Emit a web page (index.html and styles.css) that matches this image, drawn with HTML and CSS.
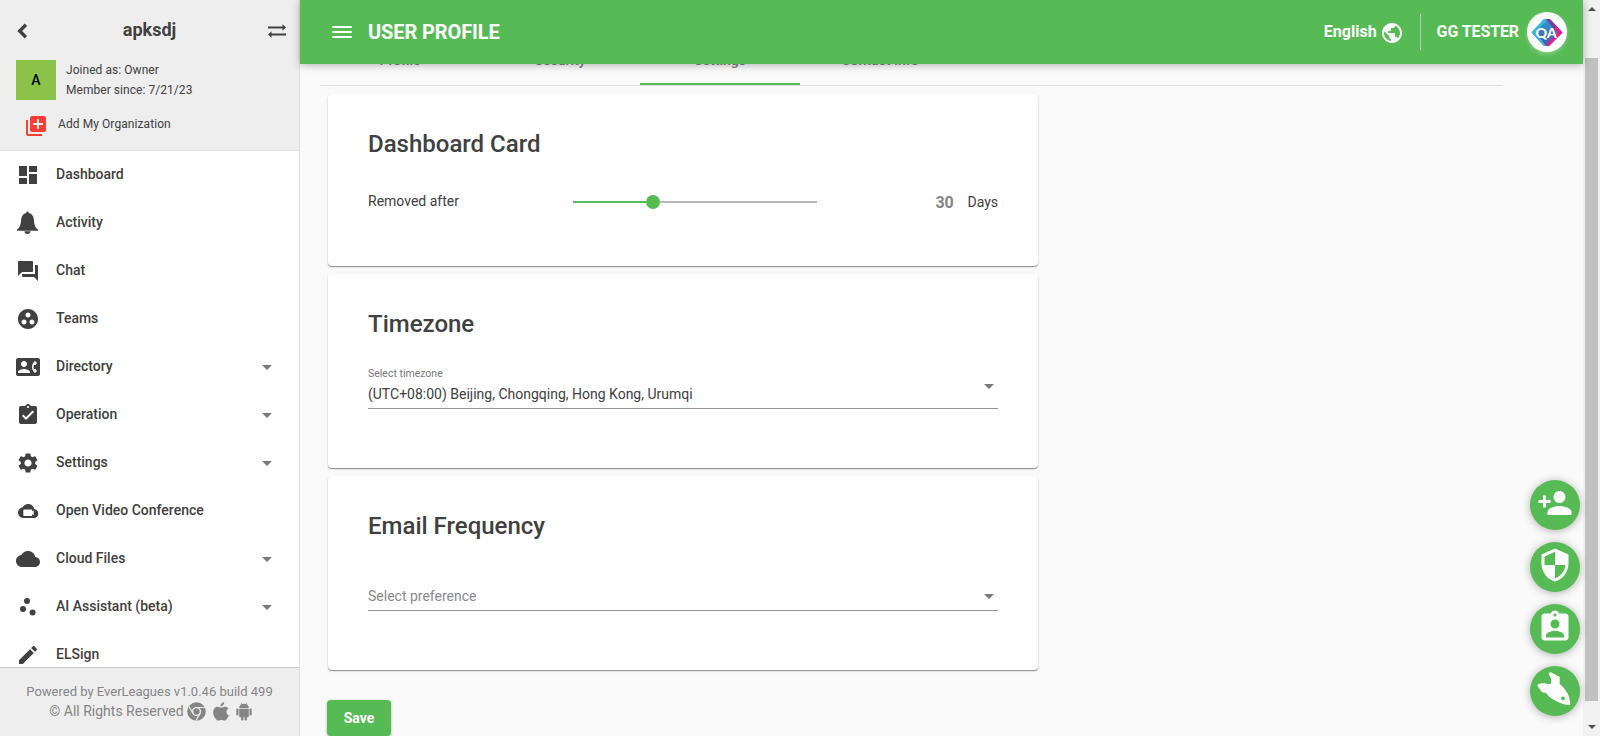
FILE: index.html
```html
<!DOCTYPE html>
<html lang="en">
<head>
<meta charset="utf-8">
<title>User Profile</title>
<link rel="stylesheet" href="styles.css">
</head>
<body>
<div class="app">
  <aside class="sidebar">
    <div class="org">
      <div class="org-top">
        <svg class="back" width="24" height="24" viewBox="0 0 24 24"><path d="M15.900 5.800L9.700 12l6.200 6.200" fill="none" stroke="currentColor" stroke-width="3.400"/></svg>
        <h2 class="org-name">apksdj</h2>
        <svg class="swap" width="20" height="16" viewBox="0 0 20 16"><path d="M1 4.500h15M4 11.500h15" stroke="currentColor" stroke-width="2"/><path d="M15.500 1.300v6.400L19 4.500zM4.500 8.300v6.400L1 11.500z" fill="currentColor"/></svg>
      </div>
      <div class="org-info">
        <div class="org-avatar">A</div>
        <div class="org-lines"><div>Joined as: Owner</div><div>Member since: 7/21/23</div></div>
      </div>
      <div class="org-add">
        <svg class="icon red" viewBox="0 0 24 24"><path d="M4 6H2v14c0 1.100.9 2 2 2h14v-2H4V6zm16-4H8c-1.100 0-2 .9-2 2v12c0 1.100.9 2 2 2h12c1.100 0 2-.9 2-2V4c0-1.100-.9-2-2-2zm-1 9h-4v4h-2v-4H9V9h4V5h2v4h4v2z"/></svg>
        <span>Add My Organization</span>
      </div>
    </div>
    <nav class="nav">
      <a class="nav-item"><svg class="icon" viewBox="0 0 24 24"><path d="M3 13h8V3H3v10zm0 8h8v-6H3v6zm10 0h8V11h-8v10zm0-18v6h8V3h-8z"/></svg><span>Dashboard</span></a>
      <a class="nav-item"><svg class="icon" viewBox="0 0 24 24"><path d="M11.500 .5c.8 0 1.300.6 1.300 1.500 3.200.7 4.700 3 5 6.200.4 4.800.9 8.200 4.200 10.300v1.200H1v-1.200c3.300-2.100 3.800-5.500 4.200-10.300.3-3.200 1.800-5.500 5-6.200 0-.9.500-1.500 1.300-1.500zM8.500 20.300h6c0 1.600-1.300 2.700-3 2.700s-3-1.100-3-2.700z"/></svg><span>Activity</span></a>
      <a class="nav-item"><svg class="icon" viewBox="0 0 24 24"><path d="M21 6h-2v9H6v2c0 .55.45 1 1 1h11l4 4V7c0-.55-.45-1-1-1zm-4 6V3c0-.55-.45-1-1-1H3c-.55 0-1 .45-1 1v14l4-4h10c.55 0 1-.45 1-1z"/></svg><span>Chat</span></a>
      <a class="nav-item"><svg class="icon" viewBox="0 0 24 24"><path d="M12 2C6.480 2 2 6.480 2 12s4.480 10 10 10 10-4.480 10-10S17.520 2 12 2zM8 17.500c-1.380 0-2.500-1.120-2.500-2.500s1.120-2.500 2.500-2.500 2.500 1.120 2.500 2.500-1.120 2.500-2.500 2.500zM9.500 8c0-1.380 1.120-2.500 2.500-2.500s2.500 1.120 2.500 2.500-1.120 2.500-2.500 2.500S9.500 9.380 9.500 8zm6.500 9.500c-1.380 0-2.500-1.120-2.500-2.500s1.120-2.500 2.500-2.500 2.500 1.120 2.500 2.500-1.120 2.500-2.500 2.500z"/></svg><span>Teams</span></a>
      <a class="nav-item"><svg class="icon" viewBox="0 0 24 24"><path d="M22 3H2C.9 3 0 3.900 0 5v14c0 1.100.9 2 2 2h20c1.100 0 1.990-.9 1.990-2L24 5c0-1.100-.9-2-2-2zM8 6c1.660 0 3 1.340 3 3s-1.340 3-3 3-3-1.340-3-3 1.340-3 3-3zm6 12H2v-1c0-2 4-3.100 6-3.100s6 1.100 6 3.100v1zm3.850-4h1.640L21 16l-1.990 1.990c-1.310-.98-2.280-2.380-2.730-3.990-.18-.64-.28-1.310-.28-2s.1-1.360.28-2c.45-1.620 1.420-3.010 2.730-3.990L21 8l-1.510 2h-1.640c-.22.63-.35 1.300-.35 2s.13 1.370.35 2z"/></svg><span>Directory</span><i class="caret"></i></a>
      <a class="nav-item"><svg class="icon" viewBox="0 0 24 24"><path d="M19 3h-4.180C14.400 1.840 13.300 1 12 1c-1.300 0-2.400.84-2.820 2H5c-1.100 0-2 .9-2 2v14c0 1.100.9 2 2 2h14c1.100 0 2-.9 2-2V5c0-1.100-.9-2-2-2zm-7 0c.55 0 1 .45 1 1s-.45 1-1 1-1-.45-1-1 .45-1 1-1zm-2 14l-4-4 1.410-1.410L10 14.170l6.590-6.590L18 9l-8 8z"/></svg><span>Operation</span><i class="caret"></i></a>
      <a class="nav-item"><svg class="icon" viewBox="0 0 24 24"><path d="M19.140 12.940c.04-.3.06-.61.06-.94 0-.32-.02-.64-.07-.94l2.030-1.580c.18-.14.23-.41.12-.61l-1.920-3.320c-.12-.22-.37-.29-.59-.22l-2.390.96c-.5-.38-1.030-.7-1.620-.94l-.36-2.540c-.04-.24-.24-.41-.48-.41h-3.840c-.24 0-.43.17-.47.41l-.36 2.540c-.59.24-1.130.57-1.620.94l-2.390-.96c-.22-.08-.47 0-.59.22L2.740 8.870c-.12.21-.08.47.12.61l2.030 1.580c-.05.3-.09.63-.09.94s.02.64.07.94l-2.030 1.580c-.18.14-.23.41-.12.61l1.920 3.320c.12.22.37.29.59.22l2.390-.96c.5.38 1.030.7 1.620.94l.36 2.540c.05.24.24.41.48.41h3.840c.24 0 .44-.17.47-.41l.36-2.540c.59-.24 1.130-.56 1.620-.94l2.390.96c.22.08.47 0 .59-.22l1.920-3.320c.12-.22.07-.47-.12-.61l-2.010-1.580zM12 15.600c-1.980 0-3.600-1.620-3.600-3.600s1.620-3.600 3.600-3.600 3.600 1.620 3.600 3.600-1.620 3.600-3.600 3.600z"/></svg><span>Settings</span><i class="caret"></i></a>
      <a class="nav-item"><svg class="icon" viewBox="0 0 24 24"><path fill-rule="evenodd" d="M18.300 10.100C17.700 7.200 15.200 5 12.200 5 9.800 5 7.600 6.400 6.600 8.400 4 8.700 2 10.900 2 13.600 2 16.500 4.300 19 7.200 19H18c2.400 0 4.300-1.900 4.300-4.300 0-2.400-1.800-4.400-4-4.600zM8 10.500h7.500c.4 0 .7.3.7.7v1.300l1.500-1.300v5.100l-1.500-1.300v1.300c0 .4-.3.700-.7.700H8c-.4 0-.7-.3-.7-.7v-5.100c0-.4.3-.7.7-.7z"/></svg><span>Open Video Conference</span></a>
      <a class="nav-item"><svg class="icon" viewBox="0 0 24 24"><path d="M19.350 10.040C18.670 6.590 15.640 4 12 4 9.110 4 6.600 5.640 5.350 8.040 2.340 8.360 0 10.910 0 14c0 3.310 2.690 6 6 6h13c2.760 0 5-2.240 5-5 0-2.640-2.050-4.780-4.650-4.960z"/></svg><span>Cloud Files</span><i class="caret"></i></a>
      <a class="nav-item"><svg class="icon" viewBox="0 0 24 24"><circle cx="7" cy="14" r="3"/><circle cx="11" cy="6" r="3"/><circle cx="16.600" cy="17.600" r="3"/></svg><span>AI Assistant (beta)</span><i class="caret"></i></a>
      <a class="nav-item"><svg class="icon" viewBox="0 0 24 24"><path d="M3 17.250V21h3.750L17.810 9.940l-3.750-3.750L3 17.250zM20.710 7.040c.39-.39.39-1.020 0-1.410l-2.340-2.340c-.39-.39-1.020-.39-1.410 0l-1.830 1.830 3.750 3.750 1.830-1.830z"/></svg><span>ELSign</span></a>
    </nav>
    <footer class="side-foot">
      <div>Powered by EverLeagues v1.0.46 build 499</div>
      <div class="rights"><span>© All Rights Reserved</span>
        <svg class="chrome" width="19" height="19" viewBox="0 0 20 20"><circle cx="10" cy="10" r="9.800" fill="currentColor"/><circle cx="10" cy="10" r="4.100" fill="none" stroke="#eee" stroke-width="1.500"/><path d="M10 5.800h8.800M6.300 12L2 4.600M13.700 12l-4.300 7.500" stroke="#eee" stroke-width="1.200"/></svg>
        <svg class="apple" width="16" height="19" viewBox="0 0 16 19"><path fill="currentColor" d="M11.200 0c.1 1.200-.3 2.200-1 3-.7.900-1.700 1.400-2.700 1.300-.1-1.100.4-2.200 1-2.900C9.200.6 10.300.1 11.200 0zM15.500 6.500c-1.300.8-2 1.900-2 3.300 0 1.600.9 2.900 2.300 3.500-.5 1.500-1.300 2.900-2.300 4.100-.6.800-1.300 1.200-2.200 1.200-1.100 0-1.600-.7-3-.7s-2 .7-3 .7c-.9 0-1.600-.5-2.300-1.300C1.200 15.400.2 12.800.2 10.300c0-3.500 2.200-5.500 4.500-5.500 1.400 0 2.600.9 3.500.9.800 0 2.200-1 3.900-1 1.400 0 2.600.6 3.400 1.800z"/></svg>
        <svg class="android" width="16" height="19" viewBox="0 0 16 19"><path fill="currentColor" d="M3.200 6C3.300 4.200 4.200 3 5.500 2.300L4.600.7l.4-.2.9 1.600a5.600 5.600 0 0 1 4.200 0L11 .5l.4.2-.9 1.600C11.800 3 12.700 4.200 12.800 6zM3.200 6.700h9.600v7.500c0 .6-.5 1-1 1h-.9v2.500a1.200 1.200 0 0 1-2.300 0v-2.500H7.400v2.500a1.200 1.200 0 0 1-2.300 0v-2.500h-.9c-.6 0-1-.4-1-1z"/><rect x=".3" y="6.500" width="2.200" height="7" rx="1.100" fill="currentColor"/><rect x="13.500" y="6.500" width="2.200" height="7" rx="1.100" fill="currentColor"/></svg>
      </div>
    </footer>
  </aside>
  <div class="main">
    <header class="topbar">
      <svg class="menu" viewBox="0 0 24 24"><path d="M2.300 18h19.400v-2H2.300v2zm0-5h19.400v-2H2.300v2zm0-7v2h19.400V6H2.300z"/></svg>
      <h1>USER PROFILE</h1>
      <div class="lang"><span>English</span><svg viewBox="0 0 24 24"><path d="M12 2C6.480 2 2 6.480 2 12s4.480 10 10 10 10-4.480 10-10S17.520 2 12 2zm-1 17.930c-3.950-.49-7-3.850-7-7.930 0-.62.08-1.210.21-1.790L9 15v1c0 1.100.9 2 2 2v1.930zm6.900-2.540c-.26-.81-1-1.390-1.900-1.390h-1v-3c0-.55-.45-1-1-1H8v-2h2c.55 0 1-.45 1-1V7h2c1.100 0 2-.9 2-2v-.41c2.930 1.190 5 4.060 5 7.410 0 2.080-.8 3.970-2.100 5.390z"/></svg></div>
      <div class="user">GG TESTER</div>
      <div class="avatar">
        <svg width="40" height="40" viewBox="0 0 40 40">
          <defs><linearGradient id="g" x1="0" y1="0" x2="0" y2="1"><stop offset="0" stop-color="#2a9fd0"/><stop offset="1" stop-color="#4a54a8"/></linearGradient></defs>
          <path d="M17 7h5l13.500 13.500L22 34h-5L4.500 20.500z" fill="url(#g)"/>
          <path d="M17 7h4L9 20.500l10 13.500h-2L4.500 20.500z" fill="#38b8e0"/>
          <path d="M19 7h4l8 8.500-3 3z" fill="#7b3a9e"/><path d="M29 13.500l6.500 7L22 34h-3.500l12-13.500-2.800-3z" fill="#ea1a8d"/>
          <text x="8.500" y="25.500" textLength="21.500" lengthAdjust="spacingAndGlyphs" class="qa">QA</text>
        </svg>
      </div>
    </header>
    <div class="tabs"><div class="tab">Profile</div><div class="tab">Security</div><div class="tab active">Settings</div><div class="tab">Contact Info</div></div>
    <div class="cards">
      <section class="card short">
        <h3>Dashboard Card</h3>
        <div class="slider-row">
          <span class="slider-label">Removed after</span>
          <div class="slider"><div class="fill"></div><div class="thumb"></div><div class="rest"></div></div>
          <b>30</b><span class="days">Days</span>
        </div>
      </section>
      <section class="card">
        <h3>Timezone</h3>
        <div class="field"><div><small>Select timezone</small><p>(UTC+08:00) Beijing, Chongqing, Hong Kong, Urumqi</p></div><i class="caret"></i></div>
      </section>
      <section class="card">
        <h3>Email Frequency</h3>
        <div class="field empty"><div><p>Select preference</p></div><i class="caret"></i></div>
      </section>
    </div>
    <button class="save">Save</button>
    <div class="fabs">
      <div class="fab"><svg viewBox="0 0 24 24"><path d="M15 12c2.210 0 4-1.790 4-4s-1.790-4-4-4-4 1.790-4 4 1.790 4 4 4zm-9-2V7H4v3H1v2h3v3h2v-3h3v-2H6zm9 4c-2.670 0-8 1.340-8 4v2h16v-2c0-2.660-5.330-4-8-4z"/></svg></div>
      <div class="fab"><svg viewBox="0 0 24 24"><path d="M12 1L3 5v6c0 5.550 3.840 10.740 9 12 5.160-1.260 9-6.450 9-12V5l-9-4zm0 10.990h7c-.53 4.120-3.280 7.790-7 8.940V12H5V6.300l7-3.110v8.800z"/></svg></div>
      <div class="fab"><svg viewBox="0 0 24 24"><path d="M19 3h-4.180C14.400 1.840 13.300 1 12 1c-1.300 0-2.400.84-2.820 2H5c-1.100 0-2 .9-2 2v14c0 1.100.9 2 2 2h14c1.100 0 2-.9 2-2V5c0-1.100-.9-2-2-2zm-7 0c.55 0 1 .45 1 1s-.45 1-1 1-1-.45-1-1 .45-1 1-1zm0 4c1.660 0 3 1.340 3 3s-1.340 3-3 3-3-1.340-3-3 1.340-3 3-3zm6 12H6v-1.400c0-2 4-3.100 6-3.100s6 1.100 6 3.100V19z"/></svg></div>
      <div class="fab"><svg viewBox="0 0 36 36"><path fill-rule="evenodd" d="M12 1.700L14 1.300 22.700 6V13Q30 19 32 26Q33.500 31 33 34Q28 34 23 32Q15 28 12 25.500L8.700 21.700 5 21.300 .5 15 .9 13 7 12 12 13.300 14.200 12.300V7.500L11.700 3.200zM26 25.400a1.900 1.900 0 1 0 .01 0z"/></svg></div>
    </div>
  </div>
  <div class="scrollbar"><i class="up"></i><div class="bar"></div><i class="down"></i></div>
</div>
</body>
</html>
```
FILE: styles.css
```css
* { box-sizing: border-box; }
body { margin: 0; font-family: Roboto, "Liberation Sans", sans-serif; font-size: 14px; color: #404040; background: #fafafa; overflow: hidden; }
h1, h2, h3, p { margin: 0; }
.app { display: flex; height: 736px; overflow: hidden; }

.sidebar { width: 300px; flex: none; display: flex; flex-direction: column; background: #fff; border-right: 1px solid #e0e0e0; }
.org { height: 151px; flex: none; background: #eee; border-bottom: 1px solid #e0e0e0; color: #404040; }
.org-top { display: flex; align-items: center; height: 60px; padding: 2px 12px 0 10px; }
.back, .swap { flex: none; }
.org-name { flex: 1; text-align: center; font-size: 18px; font-weight: 700; line-height: 24px; padding: 0 2px 3px 0; }
.org-info { display: flex; gap: 10px; padding-left: 16px; }
.org-avatar { width: 40px; height: 40px; background: #8bc34a; color: #000; font-size: 14px; font-weight: 500; display: flex; align-items: center; justify-content: center; padding-bottom: 1px; }
.org-lines { font-size: 12px; line-height: 20px; letter-spacing: .05px; }
.org-add { display: flex; align-items: center; gap: 10px; padding: 14px 0 0 24px; font-size: 12px; letter-spacing: .08px; }
.org-add span { line-height: 20px; padding-bottom: 4px; }
.icon { width: 24px; height: 24px; fill: #404040; flex: none; }
.icon.red { fill: #ff3d35; }
.nav { flex: 1; min-height: 0; overflow: hidden; }
.nav-item { display: flex; align-items: center; height: 48px; padding: 0 27px 0 16px; font-weight: 500; }
.nav-item span { flex: 1; padding: 0 0 2px 16px; }
.caret { width: 0; height: 0; border: 5px solid transparent; border-top-color: #7a7a7a; border-bottom: 0; flex: none; }
.side-foot { height: 69px; flex: none; background: #eee; border-top: 1px solid #ccc; color: #858585; text-align: center; font-size: 13px; line-height: 20px; padding-top: 14px; }
.rights { display: flex; align-items: center; justify-content: center; font-size: 14px; padding-left: 2px; margin-top: -1px; }
.chrome { margin-left: 3px; }
.apple { margin-left: 7px; }
.android { margin-left: 7px; }

.main { flex: 1; min-width: 0; position: relative; }
.topbar { position: relative; z-index: 2; height: 64px; background: #56bb54; color: #fff; display: flex; align-items: center; padding: 0 16px 0 30px; box-shadow: 0 1px 8px rgba(0,0,0,.3); }
.menu { width: 24px; height: 24px; fill: #fff; }
.topbar h1 { font-size: 20px; font-weight: 700; letter-spacing: -.1px; margin-left: 14px; flex: 1; }
.lang { display: flex; align-items: center; font-size: 16px; font-weight: 700; }
.lang span { padding-bottom: 1px; }
.lang svg { width: 24px; height: 24px; fill: #fff; margin: 2px 0 0 3px; }
.user { font-size: 16px; font-weight: 700; letter-spacing: -.1px; border-left: 1px solid #b7c9b6; height: 36px; line-height: 36px; margin-left: 16px; padding-left: 16px; }
.avatar { width: 40px; height: 40px; border-radius: 50%; background: #fff; margin-left: 8px; box-shadow: 0 2px 4px rgba(255,255,255,.3); }
.avatar svg { display: block; }
.qa { font: 900 14px Lato, sans-serif; fill: #fff; }

.tabs { display: flex; height: 49px; margin: -27px 80px 0 20px; border-bottom: 1px solid #e0e0e0; }
.tab { width: 160px; height: 49px; line-height: 46px; text-align: center; font-weight: 500; color: #7b7b7b; }
.tab.active { height: 48px; border-bottom: 2px solid #56bb54; }
.cards { width: 710px; margin: 8px 0 0 28px; display: flex; flex-direction: column; gap: 8px; }
.card { height: 194px; background: #fff; border-radius: 4px; padding: 34px 40px 0; box-shadow: 0 1px 1px rgba(0,0,0,.4), 0 1px 3px rgba(0,0,0,.1); }
.card.short { height: 172px; }
.card h3 { font-size: 24px; font-weight: 500; line-height: 32px; }
.slider-row { display: flex; align-items: center; height: 20px; margin-top: 32px; }
.slider-label { width: 205px; padding-bottom: 2px; }
.slider { width: 244px; display: flex; align-items: center; }
.fill { width: 73px; height: 2px; background: #56bb54; }
.thumb { width: 14px; height: 14px; border-radius: 50%; background: #56bb54; }
.rest { flex: 1; height: 2px; background: #b8b8b8; }
.slider-row b { flex: 1; text-align: right; font-size: 16px; font-weight: 700; letter-spacing: -.2px; color: #858585; }
.days { margin-left: 14px; }
.field { display: flex; align-items: center; justify-content: space-between; height: 55px; margin-top: 14px; border-bottom: 1px solid #949494; padding: 12px 4px 0 0; }
.field small { display: block; font-size: 10.500px; line-height: 14px; color: #777; }
.field p { line-height: 27px; }
.field .caret { margin-bottom: 1px; }
.field.empty { padding-top: 26px; }
.field.empty p { color: #8a8a8a; }
.field.empty .caret { margin: 0; }
.save { display: block; width: 64px; height: 36px; margin: 30px 0 0 27px; padding: 0 0 1px; border: 0; border-radius: 4px; background: #56bb54; color: #fff; font: 700 14px Roboto, sans-serif; box-shadow: 0 1px 3px rgba(0,0,0,.3); }
.fabs { position: absolute; z-index: 3; right: 3px; top: 480px; display: flex; flex-direction: column; gap: 12px; }
.fab { width: 50px; height: 50px; border-radius: 50%; background: #56bb54; display: flex; justify-content: center; padding-top: 5px; box-shadow: 0 1px 8px rgba(0,0,0,.3); }
.fab svg { width: 36px; height: 36px; fill: #fff; }

.scrollbar { width: 17px; flex: none; background: #f1f1f1; display: flex; flex-direction: column; align-items: center; }
.bar { width: 13px; height: 643px; margin-top: 47px; background: #c1c1c1; }
.up { margin-top: 7px; border: 4px solid transparent; border-top: 0; border-bottom-color: #505050; }
.down { margin-top: 24px; border: 4px solid transparent; border-bottom: 0; border-top-color: #505050; }
```
